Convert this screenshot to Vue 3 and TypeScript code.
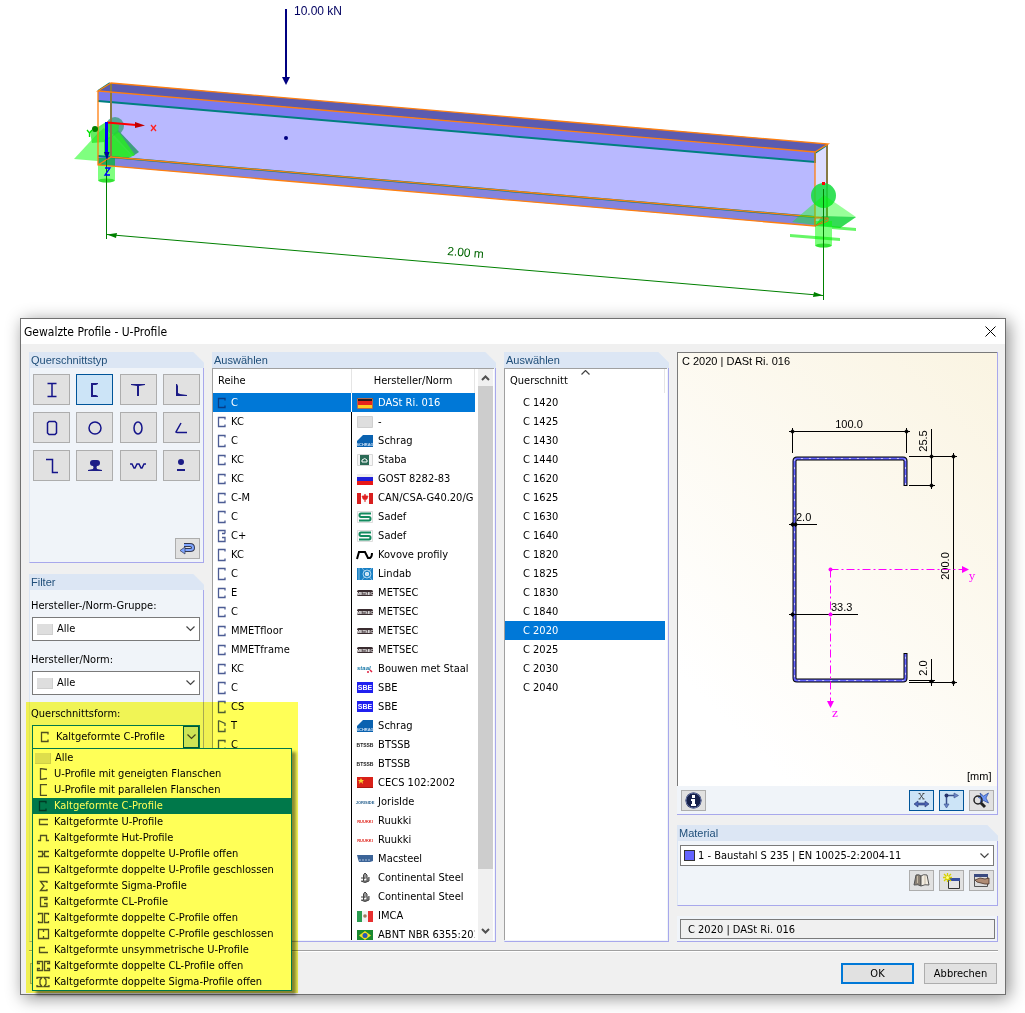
<script setup lang="ts">
import { ref } from 'vue'

interface Series {
  name: string
  shape: string
  logo: string
  maker: string
}

const shapes: Record<string, string> = {
  c: 'M11 3.500V1.500H4.500V10.500H11V8.500',
  ctall: 'M11 2.500V.5H4.500V11.500H11V9.500',
  cplus: 'M11 3.500V.5H4.500V11.500H11V7.500H8M8 3.500H11',
  trap: 'M4.5 .5V11.500H11V8.500M4.500 .5L11 3.500V6',
  none: '',
  uslope: 'M12 1.500L5.500 .5V11.500L12 10.500',
  upar: 'M12 .5H5.500V11.500H12',
  uflat: 'M13 3.500H4.500V8.500H13',
  hat: 'M3 8.500H5.500V3.500H11.500V8.500H14',
  du: 'M3 3.500H7.500V8.500H3M14 3.500H9.500V8.500H14M7.500 6H9.500',
  box: 'M3.5 3.500H13.500V8.500H3.500Z',
  sigma: 'M12 3V1.500H5.500L9 6L5.500 10.500H12V9',
  cl: 'M12 4V1.500H5.500V10.500H12V7.500H9M9 3.500H12',
  dc: 'M3.5 3V1.500H7.500V10.500H3.500V9M13.500 3V1.500H9.500V10.500H13.500V9',
  dcc: 'M3.5 1.500H13.500V10.500H3.500ZM8.500 1V4M8.500 8V11',
  uasym: 'M10 3.500H4.500V8.500H13',
  dcl: 'M5 3.500H2.500V1.500H7.500V10.500H2.500V8.500H5M12 3.500H14.500V1.500H9.500V10.500H14.500V8.500H12',
  dsig: 'M2 3V1.500H7L5 4V8L7 10.500H2V9M14 3V1.500H9L11 4V8L9 10.500H14V9',
}

const rows: [string, string, string, string][] = [
  ['C', 'c', 'de', 'DASt Ri. 016'],
  ['KC', 'c', 'blank', '-'],
  ['C', 'ctall', 'schrag', 'Schrag'],
  ['KC', 'c', 'staba', 'Staba'],
  ['KC', 'c', 'ru', 'GOST 8282-83'],
  ['C-M', 'c', 'ca', 'CAN/CSA-G40.20/G'],
  ['C', 'ctall', 'sadef', 'Sadef'],
  ['C+', 'cplus', 'sadef', 'Sadef'],
  ['KC', 'ctall', 'kovove', 'Kovove profily'],
  ['C', 'ctall', 'lindab', 'Lindab'],
  ['E', 'c', 'metsec', 'METSEC'],
  ['C', 'c', 'metsec', 'METSEC'],
  ['MMETfloor', 'c', 'metsec', 'METSEC'],
  ['MMETframe', 'c', 'metsec', 'METSEC'],
  ['KC', 'c', 'staal', 'Bouwen met Staal'],
  ['C', 'ctall', 'sbe', 'SBE'],
  ['CS', 'ctall', 'sbe', 'SBE'],
  ['T', 'trap', 'schrag', 'Schrag'],
  ['C', 'c', 'btssb', 'BTSSB'],
  ['', 'none', 'btssb', 'BTSSB'],
  ['', 'none', 'cn', 'CECS 102:2002'],
  ['', 'none', 'joris', 'JorisIde'],
  ['', 'none', 'ruukki', 'Ruukki'],
  ['', 'none', 'ruukki', 'Ruukki'],
  ['', 'none', 'mac', 'Macsteel'],
  ['', 'none', 'conti', 'Continental Steel'],
  ['', 'none', 'conti', 'Continental Steel'],
  ['', 'none', 'mx', 'IMCA'],
  ['', 'none', 'br', 'ABNT NBR 6355:201'],
]
const series: Series[] = rows.map(([name, shape, logo, maker]) => ({ name, shape, logo, maker }))

const wordmarks: Record<string, { text: string; fill: string; size: number }> = {
  btssb: { text: 'BTSSB', fill: '#222', size: 5 },
  joris: { text: 'JORISIDE', fill: '#2a6390', size: 4 },
  ruukki: { text: 'RUUKKI', fill: '#e0241c', size: 4 },
}

const sections = [
  'C 1420', 'C 1425', 'C 1430', 'C 1440', 'C 1620', 'C 1625', 'C 1630', 'C 1640',
  'C 1820', 'C 1825', 'C 1830', 'C 1840', 'C 2020', 'C 2025', 'C 2030', 'C 2040',
]

const forms = [
  { label: 'Alle', shape: 'none' },
  { label: 'U-Profile mit geneigten Flanschen', shape: 'uslope' },
  { label: 'U-Profile mit parallelen Flanschen', shape: 'upar' },
  { label: 'Kaltgeformte C-Profile', shape: 'c' },
  { label: 'Kaltgeformte U-Profile', shape: 'uflat' },
  { label: 'Kaltgeformte Hut-Profile', shape: 'hat' },
  { label: 'Kaltgeformte doppelte U-Profile offen', shape: 'du' },
  { label: 'Kaltgeformte doppelte U-Profile geschlossen', shape: 'box' },
  { label: 'Kaltgeformte Sigma-Profile', shape: 'sigma' },
  { label: 'Kaltgeformte CL-Profile', shape: 'cl' },
  { label: 'Kaltgeformte doppelte C-Profile offen', shape: 'dc' },
  { label: 'Kaltgeformte doppelte C-Profile geschlossen', shape: 'dcc' },
  { label: 'Kaltgeformte unsymmetrische U-Profile', shape: 'uasym' },
  { label: 'Kaltgeformte doppelte CL-Profile offen', shape: 'dcl' },
  { label: 'Kaltgeformte doppelte Sigma-Profile offen', shape: 'dsig' },
]

const types = [
  { name: 'I-Profile', d: 'M6.5 2.500H15.500M11 2V16M6.500 15.500H15.500', fill: false },
  { name: 'U-Profile', d: 'M14 2H7V16H14V15L12 14H9V4H12L14 3Z', fill: true },
  { name: 'T-Profile', d: 'M4 3H18V4L12 5V15H10V5L4 4Z', fill: true },
  { name: 'L-Profile', d: 'M6 3H7L8 5V12L10 13L17 14V15H6Z', fill: true },
  { name: 'Rechteckrohre', d: 'M8 2.500H14L15.500 4V14L14 15.500H8L6.500 14V4Z', fill: false },
  { name: 'Rundrohre', d: 'M5 9A6 6 0 1 1 17 9A6 6 0 1 1 5 9Z', fill: false },
  { name: 'Ovalrohre', d: 'M7 9A4 6 0 1 1 15 9A4 6 0 1 1 7 9Z', fill: false },
  { name: 'Abgekantete L-Profile', d: 'M11 4L6 13L7 13.500H17', fill: false },
  { name: 'Z-Profile', d: 'M5 2.500H11.500V15.500H17', fill: false },
  { name: 'Schienen', d: 'M6 6Q6 3 9 3H13Q16 3 16 6Q16 9 13 9Q12 10 13 12L18 13V14H4V13L9 12Q10 10 9 9Q6 9 6 6Z', fill: true },
  { name: 'Trapezprofile', d: 'M3 7H5L7 11H8L10 7H12L14 11H15L17 7H19', fill: false },
  { name: 'Rund- und Flachstahl', d: 'M8 5A3 3 0 1 1 14 5A3 3 0 1 1 8 5ZM7 12H15V14H7Z', fill: true },
]

const activeType = ref('U-Profile')
const activeSeries = ref(0)
const activeSection = ref('C 2020')
const activeForm = ref('Kaltgeformte C-Profile')
</script>

<template>
  <main class="page">
    <svg class="scene" viewBox="0 0 1025 318" role="img" aria-label="Träger mit Einzellast">
      <path d="M111 83L828 144V218L111 157Z" fill="#b9b9ff" />
      <path d="M815 152L828 144V218L815 226Z" fill="#dcdcff" />
      <g class="support">
        <path d="M74 159L98 133L104 128L131 155L121 163Z" fill="#00ff00" opacity=".5" />
        <circle cx="115" cy="126" r="9" fill="#3f9d80" opacity=".8" />
        <path d="M118 130L139 152L133 156L113 134Z" fill="#3f9d80" />
        <path d="M104 140L119 132L135 155L122 161L104 155Z" fill="#2be52b" opacity=".9" />
        <path d="M90 132L106 122L119 125L118 133L104 142L92 143Z" fill="#1ee61e" opacity=".7" />
        <path d="M98 158H115V181Q106 184 98 181Z" fill="#00ff00" opacity=".5" />
        <ellipse cx="106.500" cy="180.500" rx="8" ry="2" fill="#00d000" opacity=".6" />
      </g>
      <path d="M98 156L815 217V226L98 165Z" fill="#8484de" />
      <path d="M98 158H115V166L98 165Z" fill="#22a860" />
      <path d="M98 91L111 83L828 144L815 152Z" fill="#5b5bb0" />
      <path d="M98 91L815 152V162L98 101Z" fill="#7a7aef" />
      <path d="M98 101L815 162V152M98 156L815 217M98 91L110 83M815 153L827 145" fill="none" stroke="#008080" stroke-width="2" />
      <path d="M111 83V157M827 144V218" fill="none" stroke="#877a45" stroke-width="2" />
      <path d="M98 91L111 83L828 144L815 152ZM98 91V165L815 226V152M98 165L111 157L828 218L815 226" fill="none" stroke="#ff7f0e" stroke-width="1.300" />
      <g class="support">
        <circle cx="823.500" cy="195.500" r="12.500" fill="#12dc3c" opacity=".85" />
        <path d="M792 222L824 195L856 217L840 228Z" fill="#00ff00" opacity=".4" />
        <path d="M822 216L856 217L840 228L815 226Z" fill="#00c832" opacity=".65" />
        <path d="M815 221H832V246Q823 249 815 246Z" fill="#00ff00" opacity=".5" />
        <ellipse cx="823.500" cy="245.500" rx="8" ry="2" fill="#00d000" opacity=".6" />
        <path d="M832 226L856 228V231L832 229ZM790 234L840 238V241L790 237Z" fill="#00f000" opacity=".6" />
        <path d="M815 218H828L815 226ZM828 218V221L815 226" fill="none" stroke="#d07a20" />
      </g>
      <rect x="822" y="182" width="3" height="3" fill="#ff0000" />
      <g stroke="#008000" fill="#008000">
        <path d="M106.500 160V239M823.500 189V300M107 234.500L823 295.500" fill="none" />
        <path d="M107 234.500L117 233L116 238ZM823 295.500L813 297L814 292Z" stroke="none" />
      </g>
      <text x="447" y="255" class="dim" fill="#006400" transform="rotate(4.800 447 255)">2.00 m</text>
      <path d="M107 122.500L136 125" stroke="#ff0000" stroke-width="2" />
      <path d="M135 122L145 125.500L135 128Z" fill="#c00000" />
      <path d="M106.500 122V154" stroke="#0000ff" stroke-width="3" />
      <path d="M104 152H109.500L107 160Z" fill="#0000a0" />
      <circle cx="95" cy="129" r="3" fill="#008000" />
      <path d="M151 125L156 131M156 125L151 131" stroke="#ff2020" stroke-width="1.300" />
      <path d="M87 130L89.500 133L92 130M89.500 133V137" fill="none" stroke="#00e000" stroke-width="1.300" />
      <path d="M105 168H110L105 175H110" fill="none" stroke="#0000ff" stroke-width="1.300" />
      <path d="M286 9V78" stroke="#000080" stroke-width="2" />
      <path d="M282 77H290L286 85Z" fill="#000080" />
      <circle cx="286" cy="138" r="2" fill="#000080" />
      <text x="294" y="15" class="dim" fill="#000060">10.00 kN</text>
    </svg>

    <section class="dialog" role="dialog" aria-labelledby="dialog-title">
      <header class="titlebar">
        <h1 id="dialog-title">Gewalzte Profile - U-Profile</h1>
        <button class="close" aria-label="Schließen">
          <svg width="11" height="11" viewBox="0 0 11 11"><path d="M.5 .5L10.500 10.500M10.500 .5L.5 10.500" stroke="#000" fill="none" /></svg>
        </button>
      </header>

      <div class="body">
        <div class="col">
          <section class="panel types">
            <h2>Querschnittstyp</h2>
            <div class="type-grid">
              <button
                v-for="t in types" :key="t.name" class="btn type" :class="{ on: t.name === activeType }"
                :aria-label="t.name" @click="activeType = t.name"
              >
                <svg width="22" height="18" viewBox="0 0 22 18">
                  <path :d="t.d" :fill="t.fill ? '#1c1c86' : 'none'" :stroke="t.fill ? 'none' : '#14148a'" stroke-width="1.500" />
                </svg>
              </button>
            </div>
            <button class="btn tool back" aria-label="Zurücksetzen">
              <svg width="17" height="15" viewBox="0 0 17 15">
                <path d="M5 4H11Q14 4 14 7Q14 9 11 9H5" fill="none" stroke="#333a55" stroke-width="4" />
                <path d="M5 4H11Q14 4 14 7Q14 9 11 9H5" fill="none" stroke="#7fa5ff" stroke-width="2" />
                <path d="M6 6V13L1 9.500Z" fill="#7fa5ff" stroke="#333a55" stroke-width=".7" />
              </svg>
            </button>
          </section>

          <section class="panel filter">
            <h2>Filter</h2>
            <label for="group">Hersteller-/Norm-Gruppe:</label>
            <div class="combo">
              <span class="swatch"></span>
              <select id="group"><option>Alle</option></select>
              <svg class="chev" width="9" height="6" viewBox="0 0 9 6"><path d="M.5 .5L4.500 4.500L8.500 .5" /></svg>
            </div>
            <label for="maker">Hersteller/Norm:</label>
            <div class="combo">
              <span class="swatch"></span>
              <select id="maker"><option>Alle</option></select>
              <svg class="chev" width="9" height="6" viewBox="0 0 9 6"><path d="M.5 .5L4.500 4.500L8.500 .5" /></svg>
            </div>
            <label for="form">Querschnittsform:</label>
            <div class="combo open">
              <svg class="mini" width="16" height="12" viewBox="0 0 16 12"><path :d="shapes.c" /></svg>
              <select id="form" v-model="activeForm">
                <option v-for="f in forms" :key="f.label">{{ f.label }}</option>
              </select>
              <span class="drop"><svg class="chev" width="9" height="6" viewBox="0 0 9 6"><path d="M.5 .5L4.500 4.500L8.500 .5" /></svg></span>
              <ul class="menu" role="listbox" aria-label="Querschnittsform">
                <li
                  v-for="f in forms" :key="f.label" role="option" :aria-selected="f.label === activeForm"
                  :class="{ sel: f.label === activeForm }" @click="activeForm = f.label"
                >
                  <span v-if="f.shape === 'none'" class="swatch"></span>
                  <svg v-else class="mini" width="16" height="12" viewBox="0 0 16 12"><path :d="shapes[f.shape]" /></svg>
                  {{ f.label }}
                </li>
              </ul>
              <div class="marker"></div>
            </div>
          </section>
        </div>

        <section class="panel">
          <h2>Auswählen</h2>
          <div class="listbox">
            <div class="viewport">
              <table>
                <thead>
                  <tr><th scope="col">Reihe</th><th scope="col" class="mid">Hersteller/Norm</th></tr>
                </thead>
                <tbody>
                  <tr v-for="(s, i) in series" :key="i" :class="{ sel: i === activeSeries }" @click="activeSeries = i">
                    <td>
                      <span class="cell"><svg class="shape" width="13" height="12" viewBox="4 0 13 12"><path :d="shapes[s.shape]" /></svg>{{ s.name }}</span>
                    </td>
                    <td>
                      <span class="cell">
                        <svg class="logo" width="16" height="12" viewBox="0 0 16 12">
                          <g v-if="s.logo === 'de'">
                            <path d="M0 1H16V4H0Z" fill="#2a1a1a" /><path d="M0 4H16V8H0Z" fill="#e8241c" /><path d="M0 8H16V11H0Z" fill="#ffcc22" />
                            <path d="M.5 1.500H15.500V11.500H.5Z" fill="none" stroke="#b06a50" />
                          </g>
                          <path v-else-if="s.logo === 'blank'" d="M.5 .5H15.500V11.500H.5Z" fill="#dedede" stroke="#cfcfcf" />
                          <g v-else-if="s.logo === 'schrag'">
                            <path d="M0 12V6L6 0H16V12Z" fill="#0a62b0" />
                            <text x="8" y="11" font-size="4" text-anchor="middle" fill="#cfe2f5" class="mark">SCHRAG</text>
                          </g>
                          <g v-else-if="s.logo === 'staba'">
                            <path d="M.5 .5H15.500V11.500H.5Z" fill="#f6f6f6" stroke="#d8d8d8" />
                            <path d="M3 1H12V11H3Z" fill="#2b6a56" />
                            <path d="M5 6Q8 3 10 6V8H5Z" fill="none" stroke="#fff" />
                          </g>
                          <g v-else-if="s.logo === 'ru'">
                            <path d="M0 1H16V4H0Z" fill="#eee" /><path d="M0 4H16V8H0Z" fill="#2020d8" /><path d="M0 8H16V12H0Z" fill="#e81818" />
                          </g>
                          <g v-else-if="s.logo === 'ca'">
                            <path d="M0 1H16V12H0Z" fill="#fafafa" /><path d="M0 1H4V12H0ZM12 1H16V12H12Z" fill="#d81e1e" />
                            <path d="M8 2L9 4L11 4L10 7L8 8V10V8L6 7L5 4L7 4Z" fill="#e02020" stroke="#e02020" stroke-width=".6" />
                          </g>
                          <g v-else-if="s.logo === 'sadef'">
                            <path d="M.5 .5H15.500V11.500H.5Z" fill="#fafafa" stroke="#ddd" />
                            <path d="M14 2.500H4Q2.500 2.500 2.500 4.250Q2.500 6 4 6H12Q13.500 6 13.500 7.750Q13.500 9.500 12 9.500H2" fill="none" stroke="#128a5e" stroke-width="2" />
                          </g>
                          <path v-else-if="s.logo === 'kovove'" d="M0 10L2 3H8L11 9H13Q15 8 15 4" fill="none" stroke="#000" stroke-width="2" />
                          <g v-else-if="s.logo === 'lindab'">
                            <path d="M0 0H16V12H0Z" fill="#1a80c4" /><circle cx="10" cy="6" r="4" fill="none" stroke="#a8d4f0" />
                            <circle cx="10" cy="6" r="2" fill="#fff" /><path d="M2 0V12M5 0L15 12M15 0L5 12" stroke="#a8d4f0" stroke-width=".7" />
                          </g>
                          <g v-else-if="s.logo === 'metsec'">
                            <rect x="0" y="3" width="16" height="6" rx="1.500" fill="#3a2c30" />
                            <text x="8" y="8" font-size="4" text-anchor="middle" fill="#fff" class="mark">METSEC</text>
                          </g>
                          <g v-else-if="s.logo === 'staal'">
                            <text x="0" y="7" font-size="6" fill="#1878a8" class="mark it">staal</text>
                            <path d="M10 9H12M13 7L15 9" stroke="#e02040" stroke-width="1.500" />
                          </g>
                          <g v-else-if="s.logo === 'sbe'">
                            <path d="M0 0H16V11H0Z" fill="#2020f0" />
                            <text x="8" y="8" font-size="7" text-anchor="middle" fill="#fff" class="mark">SBE</text>
                          </g>
                          <g v-else-if="s.logo === 'cn'">
                            <path d="M0 0H16V11H0Z" fill="#d82018" /><path d="M4 1L5 3H7L5.500 4.500L6 7L4 5L2 7L2.500 4.500L1 3H3Z" fill="#f8d030" />
                            <path d="M0 10.500H16" stroke="#a81810" />
                          </g>
                          <g v-else-if="s.logo === 'mac'">
                            <path d="M0 2H16V8L13 9H2L1 6Z" fill="#3c6498" /><path d="M2 7H14" stroke="#a8c0dc" stroke-dasharray="2 1" />
                          </g>
                          <g v-else-if="s.logo === 'conti'">
                            <path d="M6.500 9V3L8 1L10 3V9ZM4 6H8M4 9Q8 12 12 9V5" fill="#999" stroke="#444" />
                          </g>
                          <g v-else-if="s.logo === 'mx'">
                            <path d="M0 1H16V12H0Z" fill="#f4f4f4" /><path d="M0 1H5V12H0Z" fill="#2a9c50" /><path d="M11 1H16V12H11Z" fill="#e83030" />
                            <circle cx="8" cy="6" r="1.800" fill="#a07860" />
                          </g>
                          <g v-else-if="s.logo === 'br'">
                            <path d="M0 1H16V12H0Z" fill="#1a8a30" /><path d="M2 6.500L8 2L14 6.500L8 11Z" fill="#f4e020" /><circle cx="8" cy="6.500" r="2.500" fill="#2858b8" />
                          </g>
                          <text
                            v-else x="8" y="8" text-anchor="middle" class="mark"
                            :font-size="wordmarks[s.logo].size" :fill="wordmarks[s.logo].fill"
                          >{{ wordmarks[s.logo].text }}</text>
                        </svg>{{ s.maker }}
                      </span>
                    </td>
                  </tr>
                </tbody>
              </table>
            </div>
            <div class="scroll" aria-hidden="true">
              <svg width="9" height="6" viewBox="0 0 9 6"><path d="M1 5L4.500 1.500L8 5" /></svg>
              <div class="track"><div class="thumb"></div></div>
              <svg width="9" height="6" viewBox="0 0 9 6"><path d="M1 1L4.500 4.500L8 1" /></svg>
            </div>
          </div>
        </section>

        <section class="panel">
          <h2>Auswählen</h2>
          <div class="listbox narrow">
            <div class="viewport">
              <table>
                <thead>
                  <tr>
                    <th scope="col">Querschnitt
                      <svg class="sort" width="9" height="5" viewBox="0 0 9 5"><path d="M.5 4.500L4.500 .5L8.500 4.500" /></svg>
                    </th>
                  </tr>
                </thead>
                <tbody>
                  <tr v-for="s in sections" :key="s" :class="{ sel: s === activeSection }" @click="activeSection = s">
                    <td class="section">{{ s }}</td>
                  </tr>
                </tbody>
              </table>
            </div>
          </div>
        </section>

        <div class="col right">
          <section class="preview">
            <svg class="canvas" viewBox="678 353 319 433" role="img" aria-label="Querschnitt C 2020">
              <g class="lab">
                <text x="682" y="365">C 2020 | DASt Ri. 016</text>
                <text x="967" y="780">[mm]</text>
                <text x="849" y="428" text-anchor="middle">100.0</text>
                <text x="796" y="521">2.0</text>
                <text x="831" y="611">33.3</text>
                <text transform="translate(927 441) rotate(-90)" text-anchor="middle">25.5</text>
                <text transform="translate(949 566) rotate(-90)" text-anchor="middle">200.0</text>
                <text transform="translate(927 668) rotate(-90)" text-anchor="middle">2.0</text>
              </g>
              <g fill="none">
                <path d="M905.500 486V461Q905.500 458.500 903 458.500H797Q794.500 458.500 794.500 461V678Q794.500 680.500 797 680.500H903Q905.500 680.500 905.500 678V653" stroke="#000" stroke-width="4" />
                <path d="M905.500 485V461Q905.500 458.500 903 458.500H797Q794.500 458.500 794.500 461V678Q794.500 680.500 797 680.500H903Q905.500 680.500 905.500 678V654" stroke="#6464ff" stroke-width="2" />
                <path d="M905.500 485V461Q905.500 458.500 903 458.500H797Q794.500 458.500 794.500 461V678Q794.500 680.500 797 680.500H903Q905.500 680.500 905.500 678V654" stroke="#c8c8ff" stroke-dasharray="2 6" />
                <path d="M789 431.500H910M792.500 428V453M906.500 428V453M909 456.500H957M909 485.500H935M931.500 429V489M953.500 453V686M909 680.500H935M909 682.500H957M931.500 659V686M789 524.500H817M789 614.500H858" stroke="#000" />
              </g>
              <path
                d="M792.500 429l2.500 2.500l-2.500 2.500l-2.500-2.500zM906.500 429l2.500 2.500l-2.500 2.500l-2.500-2.500zM931.500 454l2.500 2.500l-2.500 2.500l-2.500-2.500zM953.500 454l2.500 2.500l-2.500 2.500l-2.500-2.500zM931.500 483l2.500 2.500l-2.500 2.500l-2.500-2.500zM931.500 679l2.500 2.500l-2.500 2.500l-2.500-2.500zM953.500 680l2.500 2.500l-2.500 2.500l-2.500-2.500zM792.500 522l2.500 2.500l-2.500 2.500l-2.500-2.500zM795.500 522l2.500 2.500l-2.500 2.500l-2.500-2.500zM792.500 612l2.500 2.500l-2.500 2.500l-2.500-2.500z"
              />
              <g stroke="#ff00ff" fill="none">
                <path d="M830.500 569.500H962" stroke-dasharray="8 3 2 3" />
                <path d="M830.500 569.500V702" stroke-dasharray="8 3 2 3" />
              </g>
              <g fill="#ff00ff">
                <circle cx="830.500" cy="569.500" r="2" /><circle cx="830.500" cy="614.500" r="2" />
                <path d="M962 566L969 569.500L962 573ZM827 701H834L830.500 708Z" />
                <text x="969" y="580" class="axis">y</text>
                <text x="832" y="717" class="axis">z</text>
              </g>
            </svg>
            <div class="bar">
              <button class="btn tool" aria-label="Info">
                <svg width="17" height="17" viewBox="0 0 17 17">
                  <circle cx="8.500" cy="8.500" r="8" fill="#16204a" /><circle cx="8.500" cy="8.500" r="7.500" fill="none" stroke="#6a78a8" />
                  <path d="M7 3H10V6H7ZM6 7H10V12H11V14H6V12H7V9H6Z" fill="#fff" />
                </svg>
              </button>
              <span class="grow"></span>
              <button class="btn tool on" aria-label="Bemaßung">
                <svg width="17" height="17" viewBox="0 0 17 17">
                  <path d="M6.500 1.500L10.500 7M10.500 1.500L6.500 7M5.500 1.500H7.500M9.500 1.500H11.500M5.500 7H7.500M9.500 7H11.500" stroke="#333" stroke-width=".8" fill="none" />
                  <path d="M1 12L5 9V11H12V9L16 12L12 15V13H5V15Z" fill="#4a64b4" stroke="#26346c" stroke-width=".6" />
                </svg>
              </button>
              <button class="btn tool on" aria-label="Achsen">
                <svg width="17" height="17" viewBox="0 0 17 17">
                  <path d="M4 3.500H12M3.500 4V13" stroke="#3a508c" stroke-width="1.500" fill="none" />
                  <path d="M11 1L15.500 3.500L11 6ZM1 12H6L3.500 16Z" fill="#6c86c8" stroke="#3a508c" stroke-width=".6" />
                  <circle cx="3.500" cy="3.500" r="2" fill="#26346c" />
                </svg>
              </button>
              <button class="btn tool" aria-label="Alles zeigen">
                <svg width="17" height="17" viewBox="0 0 17 17">
                  <path d="M7 1L10.500 4L15.500 1L13 6L15.500 11L10.500 8.500L7 12L8 7L5 5L8 4Z" fill="#6c94f4" stroke="#2a4a9c" stroke-width=".7" />
                  <circle cx="5" cy="8" r="4" fill="none" stroke="#222" stroke-width="1.500" />
                  <path d="M8 11L12 15" stroke="#222" stroke-width="3" />
                </svg>
              </button>
            </div>
          </section>

          <section class="panel material">
            <h2>Material</h2>
            <div class="combo">
              <span class="color"></span>
              <select aria-label="Material"><option>1 - Baustahl S 235 | EN 10025-2:2004-11</option></select>
              <svg class="chev" width="9" height="6" viewBox="0 0 9 6"><path d="M.5 .5L4.500 4.500L8.500 .5" /></svg>
            </div>
            <div class="bar">
              <span class="grow"></span>
              <button class="btn tool" aria-label="Materialbibliothek">
                <svg width="17" height="15" viewBox="0 0 17 15">
                  <path d="M3 2Q6 1 8 3V13Q5 11 1 12Z" fill="#8a8074" stroke="#555" /><path d="M8 3Q10 1 14 2L16 12Q12 11 8 13Z" fill="#f2ece0" stroke="#555" />
                  <path d="M4.500 3V10M12 3V11" stroke="#c8bca8" />
                </svg>
              </button>
              <button class="btn tool" aria-label="Neues Material">
                <svg width="17" height="16" viewBox="0 0 17 16">
                  <path d="M5.500 5.500H16.500V15.500H5.500Z" fill="#e4e4e4" stroke="#333" /><path d="M5 5H17V8H5Z" fill="#3850a0" />
                  <path d="M4.500 0V9M0 4.500H9M1 1L8 8M8 1L1 8" stroke="#d8d000" stroke-width="1.300" /><circle cx="4.500" cy="4.500" r="1.500" fill="#ffff80" />
                </svg>
              </button>
              <button class="btn tool" aria-label="Material bearbeiten">
                <svg width="17" height="15" viewBox="0 0 17 15">
                  <path d="M1.500 1.500H14.500V13.500H1.500Z" fill="#dcdcdc" stroke="#555" /><path d="M1 1H15V4H1Z" fill="#3a4a80" />
                  <path d="M2 7L7 5L12 6L16 5V11L12 11L8 10L4 9Z" fill="#b08c74" stroke="#4a3428" stroke-width=".8" />
                </svg>
              </button>
            </div>
          </section>

          <div class="result">
            <input type="text" readonly aria-label="Querschnitt" :value="activeSection + ' | DASt Ri. 016'" />
          </div>
        </div>
      </div>

      <footer class="foot">
        <button class="btn tool" aria-label="Hilfe"></button>
        <span class="grow"></span>
        <button class="btn push ok">OK</button>
        <button class="btn push">Abbrechen</button>
      </footer>
    </section>
  </main>
</template>

<style>
body {
  background: #fff;
}
</style>

<style scoped>
* {
  box-sizing: border-box;
}
.page {
  font: 11px/16px "DejaVu Sans Condensed", "Liberation Sans", sans-serif;
  color: #000;
  padding-bottom: 18px;
}
.scene {
  display: block;
  width: 100%;
  height: auto;
}
.dim {
  font: 12px "Liberation Sans", Arial, sans-serif;
}
button,
select,
input {
  font: inherit;
  color: inherit;
  padding: 0;
  border-radius: 0;
}
h1,
h2,
ul {
  margin: 0;
  padding: 0;
  font: inherit;
  list-style: none;
}
.dialog {
  margin: 0 19px 0 20px;
  border: 1px solid #707070;
  background: #f0f0f0;
  box-shadow: 3px 3px 16px rgba(0, 0, 0, 0.45);
}
.titlebar {
  display: flex;
  align-items: center;
  justify-content: space-between;
  height: 25px;
  padding: 0 9px 0 3px;
  background: #fff;
}
.titlebar h1 {
  font-size: 12px;
}
.close {
  display: flex;
  border: 0;
  background: none;
}
.body {
  display: grid;
  grid-template-columns: 175px 284fr 165fr 321fr;
  gap: 8px;
  padding: 8px 7px 8px 8px;
}
.col {
  display: flex;
  flex-direction: column;
  gap: 11px;
  min-width: 0;
}
.panel {
  display: flex;
  flex-direction: column;
  min-width: 0;
  background: #f0f4f9;
  border-left: 1px solid #dce6f4;
  border-right: 1px solid #a8a8ec;
  border-bottom: 1px solid #a8a8ec;
}
.panel h2 {
  height: 16px;
  margin: 0 -1px;
  padding-left: 2px;
  font: 11px/16px "Liberation Sans", Arial, sans-serif;
  color: #1f4e79;
  background: linear-gradient(225deg, #f0f0f0 7px, #dce6f4 8px);
}
.types {
  height: 211px;
}
.type-grid {
  display: grid;
  grid-template-columns: repeat(4, 37px);
  justify-content: space-between;
  gap: 7px 0;
  padding: 6px 3px 0;
}
.btn {
  display: flex;
  align-items: center;
  justify-content: center;
  border: 1px solid #adadad;
  background: #e1e1e1;
}
.btn.on {
  border-color: #005499;
  background: #cce4f7;
}
.type {
  height: 31px;
}
.tool {
  width: 25px;
  height: 21px;
  flex: none;
}
.back {
  margin: auto 3px 3px auto;
}
.filter {
  flex: 1;
}
.filter label {
  padding: 8px 0 3px 1px;
}
.combo {
  position: relative;
  display: flex;
  align-items: center;
  height: 24px;
  margin: 0 3px 0 2px;
  padding: 0 4px;
  border: 1px solid #7a7a7a;
  background: #fff;
}
.filter .combo {
  margin-bottom: 3px;
}
.combo select {
  flex: 1;
  min-width: 0;
  appearance: none;
  border: 0;
  background: none;
  outline: 0;
}
.swatch {
  flex: none;
  width: 16px;
  height: 11px;
  margin-right: 4px;
  background: #dedede;
  border-right: 1px solid #cfcfcf;
  border-bottom: 1px solid #cfcfcf;
}
.chev path,
.sort path {
  fill: none;
  stroke: #444;
  stroke-width: 1.2;
}
.mini {
  flex: none;
  margin-right: 3px;
}
.mini path {
  fill: none;
  stroke: #50505a;
  stroke-width: 1.3;
}
.combo.open {
  border-color: #0078d7;
  padding-right: 0;
}
.drop {
  display: flex;
  align-items: center;
  justify-content: center;
  align-self: stretch;
  width: 16px;
  border: 1px solid #005499;
  background: #cce4f7;
}
.menu {
  position: absolute;
  z-index: 2;
  top: 22px;
  left: -1px;
  width: 260px;
  padding: 1px 0 0;
  border: 1px solid #0078d7;
  background: #fff;
  box-shadow: 4px 4px 3px rgba(0, 0, 0, 0.45);
}
.menu li {
  display: flex;
  align-items: center;
  height: 16px;
  padding-left: 2px;
  white-space: nowrap;
}
.menu .sel {
  background: #0078d7;
  color: #fff;
}
.menu .sel path {
  stroke: #003a68;
}
.marker {
  position: absolute;
  z-index: 3;
  top: -24px;
  left: -7px;
  width: 272px;
  height: 291px;
  background: #ffff57;
  mix-blend-mode: multiply;
  pointer-events: none;
}
.listbox {
  display: flex;
  height: 572px;
  margin-right: 1px;
  border-top: 1px solid #a0a0a0;
  border-left: 1px solid #a0a0a0;
  margin-left: -1px;
  background: #fff;
}
.viewport {
  flex: 1;
  min-width: 0;
  overflow: hidden;
}
table {
  width: 100%;
  border-collapse: collapse;
  table-layout: fixed;
}
th {
  height: 24px;
  padding: 0 0 0 5px;
  font-weight: normal;
  text-align: left;
  border-right: 1px solid #e5e5e5;
}
th:first-child {
  width: 53%;
}
.narrow th:first-child {
  width: auto;
}
th.mid {
  padding: 0;
  text-align: center;
}
td {
  height: 19px;
  padding: 0 0 0 5px;
  overflow: hidden;
  white-space: nowrap;
}
td + td {
  border-left: 1px solid #000;
}
.sel td {
  background: #0078d7;
  color: #fff;
  border-color: #fff;
}
.cell {
  display: flex;
  align-items: center;
}
.shape,
.logo {
  flex: none;
  overflow: visible;
}
.shape path {
  fill: none;
  stroke: #4c5c94;
  stroke-width: 1.3;
}
.sel .shape path {
  stroke: #083c86;
}
.logo {
  margin-right: 5px;
}
.mark {
  font-family: "Liberation Sans", Arial, sans-serif;
  font-weight: bold;
}
.mark.it {
  font-style: italic;
}
.scroll {
  display: flex;
  flex-direction: column;
  align-items: center;
  width: 15px;
  margin: 0 1px 0 3px;
  padding: 6px 0;
  background: #f0f0f0;
}
.scroll path {
  fill: none;
  stroke: #505050;
  stroke-width: 2;
}
.track {
  flex: 1;
  width: 100%;
  margin: 5px 0;
}
.thumb {
  height: 90%;
  background: #cdcdcd;
}
.narrow .viewport {
  margin-right: 2px;
}
.narrow th {
  position: relative;
}
.sort {
  position: absolute;
  top: 1px;
  left: 48%;
}
.section {
  padding-left: 18px;
}
.right {
  gap: 10px;
}
.preview {
  display: flex;
  flex-direction: column;
  flex: 1;
  border-right: 1px solid #a8a8ec;
  border-bottom: 1px solid #a8a8ec;
  background: #f0f4f9;
}
.canvas {
  display: block;
  width: 100%;
  height: auto;
  flex: 1;
  border-top: 1px solid #7a7a7a;
  border-left: 1px solid #7a7a7a;
  background: linear-gradient(45deg, #fff 15%, #faf4e2);
}
.lab {
  font: 11px "Liberation Sans", Arial, sans-serif;
}
.axis {
  font: 11px "DejaVu Serif", serif;
}
.bar {
  display: flex;
  gap: 5px;
  padding: 4px 3px 3px 4px;
}
.grow {
  flex: 1;
}
.material {
  height: 81px;
}
.material .combo {
  height: 21px;
  margin-top: 4px;
  padding: 0 4px 0 3px;
}
.color {
  width: 11px;
  height: 11px;
  margin-right: 3px;
  border: 1px solid #333;
  background: #6464ff;
}
.result {
  padding: 3px 2px 2px 3px;
  border-right: 1px solid #a8a8ec;
  border-bottom: 1px solid #a8a8ec;
  background: #f0f4f9;
}
.result input {
  display: block;
  width: 100%;
  height: 20px;
  padding-left: 7px;
  border: 1px solid #7a7a7a;
  background: #f0f0f0;
}
.foot {
  display: flex;
  gap: 10px;
  margin: 0 7px 0 8px;
  padding: 12px 1px 10px;
  border-top: 1px solid #a0a0a0;
  box-shadow: inset 0 1px #fff;
}
.push {
  width: 73px;
  height: 21px;
}
.ok {
  border: 2px solid #0078d7;
}
</style>
